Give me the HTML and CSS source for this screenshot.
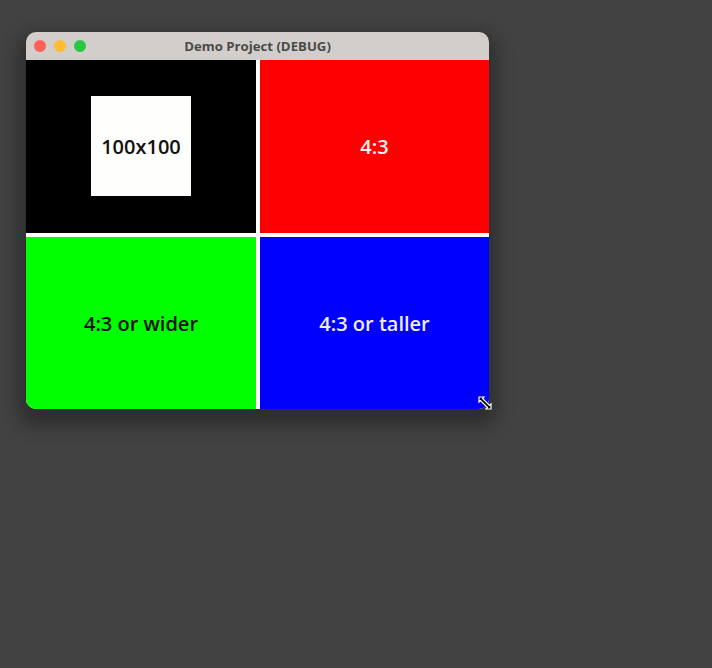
FILE: index.html
```html
<!DOCTYPE html>
<html>
<head>
<meta charset="utf-8">
<link rel="stylesheet" href="styles.css">
</head>
<body>
<div class="desk">
  <div class="window">
    <div class="titlebar">
      <div class="lights">
        <span class="light red"></span>
        <span class="light yellow"></span>
        <span class="light green"></span>
      </div>
      <div class="title">Demo Project (DEBUG)</div>
    </div>
    <div class="grid">
      <div class="cell black"><div class="box">100x100</div></div>
      <div class="cell redc">4:3</div>
      <div class="cell greenc">4:3 or wider</div>
      <div class="cell bluec">4:3 or taller</div>
    </div>
    <svg class="resize" width="16" height="16" viewBox="0 0 16 16">
      <path d="M2 2 L7 2 L5.5 3.5 L12.5 10.5 L14 9 L14 14 L9 14 L10.5 12.5 L3.5 5.5 L2 7 Z" fill="#000" stroke="#fff" stroke-width="1.2" stroke-linejoin="miter"/>
    </svg>
  </div>
</div>
</body>
</html>
```
FILE: styles.css
```css
html, body {
  margin: 0;
  padding: 0;
  background: #424242;
  width: 712px;
  height: 668px;
  overflow: hidden;
}
.desk {
  padding: 32px 0 0 26px;
}
.window {
  position: relative;
  width: 463px;
  border-radius: 10px;
  box-shadow: 0 10px 18px 8px rgba(0,0,0,0.3);
}
.titlebar {
  height: 28px;
  background: #d2cecb;
  border-radius: 10px 10px 0 0;
  display: flex;
  align-items: center;
  position: relative;
}
.lights {
  display: flex;
  gap: 8px;
  padding-left: 8px;
}
.light {
  width: 12px;
  height: 12px;
  border-radius: 50%;
  display: block;
}
.light.red { background: #fe5f57; }
.light.yellow { background: #febc2e; }
.light.green { background: #28c840; }
.title {
  position: absolute;
  left: 0;
  right: 0;
  top: 0;
  text-align: center;
  font-family: "Open Sans", sans-serif;
  font-weight: 700;
  font-size: 13.2px;
  color: #4b4a49;
  line-height: 28px;
}
.grid {
  display: grid;
  grid-template-columns: 230px 229px;
  grid-template-rows: 173px 172px;
  gap: 4px;
  background: #fff;
  border-radius: 0 0 10px 10px;
  overflow: hidden;
}
.cell {
  display: flex;
  align-items: center;
  justify-content: center;
  font-family: "Open Sans", sans-serif;
  font-weight: 600;
  font-size: 20px;
}
.black { background: #000; padding-bottom: 1px; }
.box {
  width: 100px;
  height: 100px;
  background: #fefefc;
  color: #111;
  display: flex;
  align-items: center;
  justify-content: center;
}
.redc { background: #ff0000; color: #f2f2f2; }
.greenc { background: #00ff00; color: #111; }
.bluec { background: #0000ff; color: #ececec; }
.resize {
  position: absolute;
  right: -4px;
  bottom: -2px;
}
```
